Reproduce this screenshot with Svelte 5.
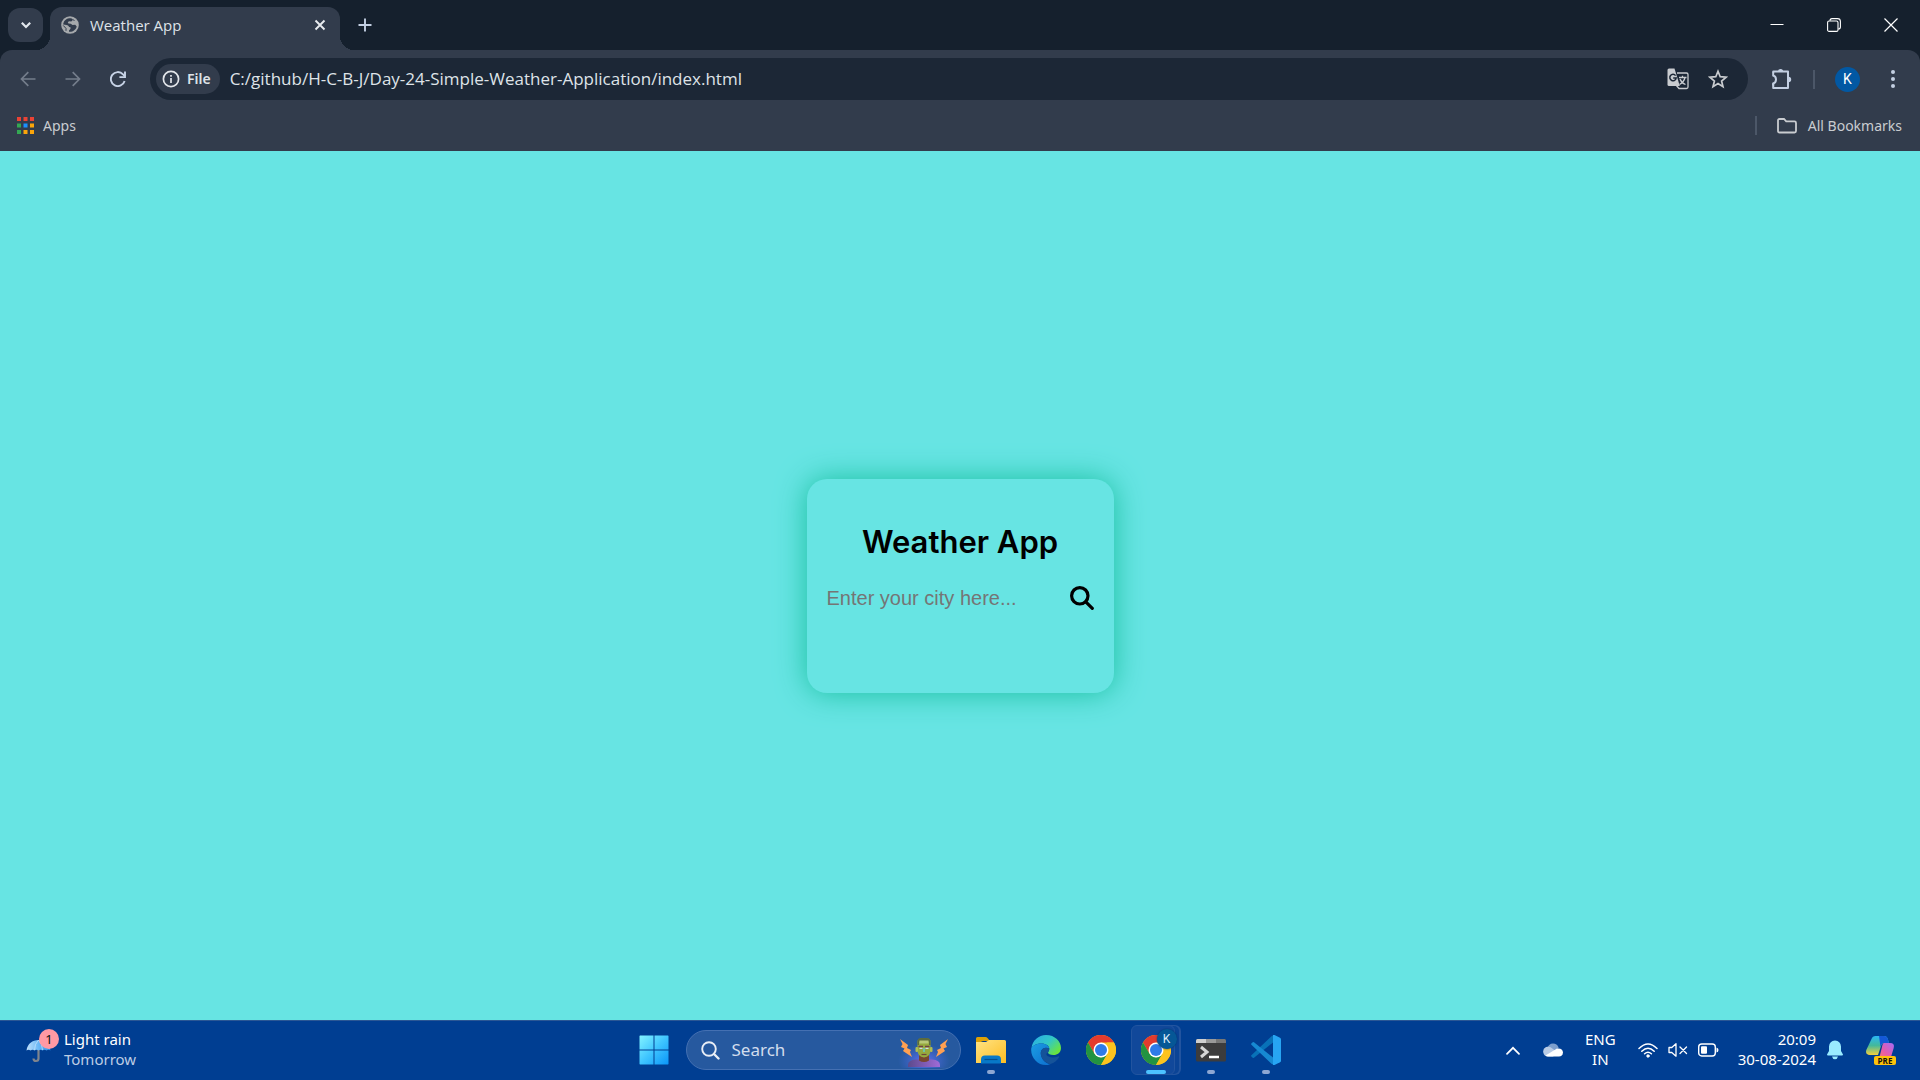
<script lang="ts">
  let city = $state('');
  let query = $state('');
  const address = 'C:/github/H-C-B-J/Day-24-Simple-Weather-Application/index.html';
  const dots = [
    ['#ea4335', '#ea4335', '#ea4335'],
    ['#34a853', '#1a90ff', '#fba50a'],
    ['#34a853', '#fba50a', '#fba50a']
  ];
</script>

{#snippet chrome()}
  <svg width="30" height="30" viewBox="0 0 30 30" aria-hidden="true">
    <circle cx="15" cy="15" r="15" fill="#fcc31e" />
    <path d="M2 7.5A15 15 0 0 1 28 7.5H15L8.5 18.8z" fill="#e33b2e" />
    <path d="M2 7.5A15 15 0 0 0 15 30L21.5 18.7 15 22.5 8.5 18.8z" fill="#229342" />
    <path d="M28 7.5A15 15 0 0 1 15 30L21.5 18.7 21 7.5z" fill="#fcc31e" />
    <circle cx="15" cy="15" r="7.5" fill="#fff" />
    <circle cx="15" cy="15" r="6" fill="#2f7be8" />
  </svg>
{/snippet}

<div class="screen">
  <header class="browser">
    <div class="tabstrip">
      <button class="tab-search" aria-label="Search tabs">
        <svg width="12" height="8" viewBox="0 0 12 8"><path d="M1.8 1.8 6 6l4.200-4.200" fill="none" stroke="#e3e8ee" stroke-width="2.200" /></svg>
      </button>
      <div class="tab">
        <svg width="18" height="18" viewBox="0 0 18 18" aria-hidden="true">
          <circle cx="9" cy="9" r="8.800" fill="#a6a9ac" />
          <path d="M8.200 2.200C4.600 2.600 2.300 5.500 2.200 8.600L5.500 9c1.500.2 2.300.9 2.500 2l1.500.3v1.500L8 14.500v1.300c3.500.5 6.800-1.600 7.700-5.200l-1.500-1.900-2.700.4-1.700-1.300-2.400-.2-.6-1.600 1.600-.8 1.800.2 1.300-1V3l-1.400-.8z" fill="#323c4c" />
          <path d="M2.200 9.400 5 12.400v2.400M11.500 3.500l2 1" stroke="#323c4c" stroke-width="1" fill="none" />
        </svg>
        <span class="tab-title">Weather App</span>
        <button class="bare" aria-label="Close tab">
          <svg width="12" height="12" viewBox="0 0 12 12"><path d="M1.500 1.500l9 9m0-9l-9 9" stroke="#e8ebef" stroke-width="1.900" /></svg>
        </button>
      </div>
      <button class="bare new-tab" aria-label="New tab">
        <svg width="14" height="14" viewBox="0 0 14 14"><path d="M7 .5v13M.5 7h13" stroke="#c3cfe2" stroke-width="1.900" /></svg>
      </button>
      <div class="window-controls">
        <button class="bare" aria-label="Minimize"><svg width="14" height="14" viewBox="0 0 14 14"><path d="M.5 6.500h13" stroke="#fff" /></svg></button>
        <button class="bare" aria-label="Restore">
          <svg width="14" height="14" viewBox="0 0 14 14" fill="none" stroke="#fff" stroke-width="1.100"><rect x=".6" y="3" width="10.400" height="10.400" rx="1.500" /><path d="M3 2.800Q3 .6 5 .6h5.500q2.900 0 2.900 2.900V9q0 2-2.200 2" /></svg>
        </button>
        <button class="bare" aria-label="Close window"><svg width="14" height="14" viewBox="0 0 14 14"><path d="M.5.5l13 13m0-13l-13 13" stroke="#fff" stroke-width="1.200" /></svg></button>
      </div>
    </div>

    <div class="toolbar">
      <nav class="nav" aria-label="History">
        <button class="bare" aria-label="Back"><svg width="16" height="16" viewBox="0 0 16 16" fill="none" stroke="#747d8b" stroke-width="1.700"><path d="M15.500 8H2M8.300 1.200 1.500 8l6.800 6.800" /></svg></button>
        <button class="bare" aria-label="Forward"><svg width="16" height="16" viewBox="0 0 16 16" fill="none" stroke="#747d8b" stroke-width="1.700"><path d="M.5 8H14M7.700 1.200 14.500 8l-6.800 6.800" /></svg></button>
        <button class="bare" aria-label="Reload"><svg width="16" height="16" viewBox="0 0 16 16" fill="none" stroke="#c7d3e6" stroke-width="1.900"><path d="M14.600 10A7 7 0 1 1 13 3.300L14.800 5.200" /><path d="M15 .5v5.600H9.400" /></svg></button>
      </nav>
      <div class="omnibox">
        <button class="chip">
          <svg width="18" height="18" viewBox="0 0 18 18" aria-hidden="true"><circle cx="9" cy="9" r="7.600" fill="none" stroke="#e3e6ea" stroke-width="1.700" /><path d="M9 8v5M9 5v1.800" stroke="#e3e6ea" stroke-width="1.700" /></svg>
          File
        </button>
        <input class="address" aria-label="Address" value={address} spellcheck="false" />
        <button class="bare" aria-label="Translate this page">
          <svg width="22" height="22" viewBox="0 0 22 22"><path d="M10 5h9.500q1.500 0 1.500 1.500V19q0 1.500-1.500 1.500H12L9 17" fill="none" stroke="#c9ccd0" stroke-width="1.300" /><path d="M2 .5h5.500L12.800 18H2Q.5 18 .5 16.500V2Q.5.500 2 .5z" fill="#c9ccd0" /><path d="M8.600 7.600A3.200 3.200 0 1 0 9.200 10H6.200" fill="none" stroke="#1c2736" stroke-width="1.500" /><path d="M12 9.500h7.500M15.500 7.800v1.700M18 9.500q-1 4.500-5.500 7M13 11q1.500 4 5.500 5.500" fill="none" stroke="#c9ccd0" stroke-width="1.300" /></svg>
        </button>
        <button class="bare" aria-label="Bookmark this page">
          <svg width="20" height="20" viewBox="0 0 20 20"><path d="M10 2.300l2.200 5.400 5.900.5-4.500 3.800 1.400 5.700L10 14.600l-5 3.100 1.400-5.700-4.500-3.800 5.900-.5z" fill="none" stroke="#c9ccd0" stroke-width="1.700" /></svg>
        </button>
      </div>
      <div class="tools">
        <button class="bare" aria-label="Extensions">
          <svg width="22" height="22" viewBox="0 0 22 22"><path d="M2.200 5V3.500H17V9M17 13v7H2.200V15.500" fill="none" stroke="#c3cfe2" stroke-width="2" stroke-linejoin="round" /><path d="M2.200 4.500v3q2.800.8 2.800 4t-2.800 4v2M17 8.500v5" fill="none" stroke="#c3cfe2" stroke-width="2" /><path d="M7 3.500a2.600 2.600 0 0 1 5.200 0zM17.500 8.800a2.700 2.700 0 0 1 0 5.400z" fill="#c3cfe2" /></svg>
        </button>
        <span class="rule"></span>
        <button class="avatar">K</button>
        <button class="bare" aria-label="Menu"><svg width="6" height="20" viewBox="0 0 6 20" fill="#c3cfe2"><circle cx="3" cy="3" r="2" /><circle cx="3" cy="10" r="2" /><circle cx="3" cy="17" r="2" /></svg></button>
      </div>
    </div>

    <div class="bookmarks">
      <a href="#apps">
        <svg width="17" height="17" viewBox="0 0 17 17" aria-hidden="true">
          {#each dots as row, y}{#each row as fill, x}<rect x={x * 6.5} y={y * 6.5} width="4" height="4" {fill} />{/each}{/each}
        </svg>
        Apps
      </a>
      <a class="all" href="#bookmarks">
        <span class="rule"></span>
        <svg width="20" height="16" viewBox="0 0 20 16" aria-hidden="true"><path d="M1 2.500Q1 1 2.500 1H7l2.200 2.400h8.300Q19 3.400 19 4.900V13q0 1.500-1.500 1.500h-15Q1 14.500 1 13z" fill="none" stroke="#c9ccd0" stroke-width="1.800" /></svg>
        All Bookmarks
      </a>
    </div>
  </header>

  <main>
    <section class="card">
      <h1>Weather App</h1>
      <form class="finder" onsubmit={(e) => e.preventDefault()}>
        <input type="text" aria-label="City" placeholder="Enter your city here..." bind:value={city} />
        <button class="bare" aria-label="Search">
          <svg width="24" height="24" viewBox="0 0 24 24" fill="none" stroke="#000"><circle cx="9.800" cy="9.800" r="8.200" stroke-width="3.200" /><path d="M15.800 15.800l6.500 6.500" stroke-width="3.200" stroke-linecap="round" /></svg>
        </button>
      </form>
    </section>
  </main>

  <footer class="taskbar">
    <button class="weather">
      <span class="umbrella">
        <svg width="25" height="30" viewBox="0 0 25 30" aria-hidden="true">
          <defs><linearGradient id="canopy" x1="0" x2="1"><stop offset="0" stop-color="#bfe0fb" /><stop offset=".5" stop-color="#6bb8f6" /><stop offset="1" stop-color="#2f8fe8" /></linearGradient></defs>
          <path d="M12.500 15v8.500q0 2.500-2.500 2.500t-2.500-2.500" fill="none" stroke="#7f848d" stroke-width="2.200" />
          <path d="M.5 15.500C1.500 8.500 6.500 5 12.500 5s11 3.500 12 10.500q-2-1.500-4 0-2-1.500-4 0-2-1.500-4 0-2-1.500-4 0-2-1.500-4 0-2-1.500-4 0z" fill="url(#canopy)" />
          <path d="M8.500 15Q8.500 9 12.500 5q4 4 4 10" fill="none" stroke="#c9e5fb" stroke-width=".7" />
        </svg>
        <span class="count">1</span>
      </span>
      <span class="lines"><span>Light rain</span><span class="dim">Tomorrow</span></span>
    </button>

    <div class="dock">
      <button class="slot" aria-label="Start">
        <svg width="30" height="30" viewBox="0 0 30 30"><defs><linearGradient id="win" x1="0" y1="0" x2="1" y2="1"><stop offset="0" stop-color="#83f3ff" /><stop offset=".5" stop-color="#3fc5ff" /><stop offset="1" stop-color="#0a95f8" /></linearGradient></defs><path d="M1 .5h13.500v14H.5V1zM15.500.5H29l.5.500v13.500h-14zM.5 15.500h14v14H1l-.5-.5zM15.500 15.500h14V29l-.5.500H15.500z" fill="url(#win)" /></svg>
      </button>
      <label class="search">
        <svg width="19" height="19" viewBox="0 0 19 19" fill="none" stroke="#e9eef6" aria-hidden="true"><circle cx="8" cy="8" r="6.800" stroke-width="1.900" /><path d="M13 13l4.500 4.500" stroke-width="2.400" stroke-linecap="round" /></svg>
        <input type="text" aria-label="Search" placeholder="Search" bind:value={query} />
        <svg class="monster" width="54" height="32" viewBox="0 0 54 32" aria-hidden="true">
          <defs><radialGradient id="glow"><stop offset="0" stop-color="#6b73ff" stop-opacity=".9" /><stop offset="1" stop-color="#4a6be0" stop-opacity="0" /></radialGradient><linearGradient id="shirt" x1="0" x2="1"><stop offset="0" stop-color="#5c4a8c" /><stop offset="1" stop-color="#a06bd8" /></linearGradient></defs>
          <ellipse cx="27" cy="25" rx="26" ry="17" fill="url(#glow)" />
          <path d="M3 3l8 6-1 3 4 2-1 2 2 5-9-6 1.500-2.500-3.500-1.500L5.500 8z" fill="#ffa052" />
          <path d="M51 3l-8 6 1 3-4 2 1 2-2 5 9-6-1.500-2.500 3.500-1.500L48.500 8z" fill="#ffa052" />
          <path d="M11 31v-2q0-5 8-5.500h16q8 .5 8 5.500v2z" fill="url(#shirt)" />
          <path d="M22 19h10v5.500q-5 3-10 0z" fill="#78472f" />
          <path d="M20.500 5Q21 2.500 24 2.500h6q3 0 3.500 2.500v9q0 7-6.500 7.500-6.500-.5-6.500-7.500z" fill="#96a93e" />
          <path d="M20.500 9V5Q21 2 24 2h6q3 0 3.500 3v4H32V5.500H22V9z" fill="#5c6b3d" />
          <path d="M22.500 4.500h9v3h-9z" fill="#b8c877" />
          <rect x="18.500" y="11" width="2.500" height="5" rx="1" fill="#b0bd52" /><rect x="33" y="11" width="2.500" height="5" rx="1" fill="#b0bd52" />
          <path d="M21.500 10.500h4.500M28 10.500h4.500" stroke="#6f3f45" stroke-width="1.600" />
          <path d="M22.500 12.300h3M28.500 12.300h3" stroke="#d4dce4" stroke-width="1.300" />
          <path d="M27 12v4" stroke="#6cc7b7" stroke-width="1.700" /><path d="M24.500 18.500h5" stroke="#6f4638" stroke-width="1.200" />
        </svg>
      </label>
      <button class="slot running" aria-label="File Explorer">
        <svg width="30" height="28" viewBox="0 0 30 28"><defs><linearGradient id="folder" x1="0" y1="0" x2="1" y2="1"><stop offset="0" stop-color="#ffe384" /><stop offset="1" stop-color="#fdbd22" /></linearGradient></defs><path d="M0 8V2.500Q0 1 1.500 1h8q1.200 0 2 1L14 5H7z" fill="#dda107" /><path d="M0 6h10l3-2h15.500Q30 4 30 5.500V27H0z" fill="url(#folder)" /><path d="M5 27.500v-4q0-4 4-4h12q4 0 4 4v4z" fill="#0878c8" /><path d="M8.500 23.500h13" stroke="#034f91" stroke-width="1.200" /></svg>
      </button>
      <button class="slot" aria-label="Edge">
        <svg width="30" height="30" viewBox="0 0 30 30"><defs><linearGradient id="edgeA" x1="0" y1="0" x2="1" y2=".7"><stop offset="0" stop-color="#2aa9e8" /><stop offset=".55" stop-color="#31c7c7" /><stop offset="1" stop-color="#6be53b" /></linearGradient><linearGradient id="edgeB" x1="0" y1="0" x2="1" y2="1"><stop offset="0" stop-color="#1b9de2" /><stop offset="1" stop-color="#0d6fd0" /></linearGradient></defs><path d="M.5 13C1.500 5.500 7.500 0 15 0c9 0 15 6.500 15 13 0 4.500-3.500 7-7.500 7-3.500 0-5.500-1.200-5.500-2.400 0-.8 1.300-1.600 1.300-3.900C18.300 11 15 8.500 10.500 8.500c-5 0-8.500 2-10 4.500z" fill="url(#edgeA)" /><path d="M.3 13C2 10 6 8.500 10 8.500c4.500 0 8 2.300 8.300 5C12.500 11 9.500 15 9.800 19c.4 5 4.700 9.500 9.700 10-2 1-3.500 1-4.500 1C6 30-.8 22 .3 13z" fill="url(#edgeB)" /><path d="M18.300 13.500C12.500 11 9.500 15 9.800 19c.4 5.500 5.700 9.500 9.700 10 3.500-1 6.800-3.500 8.600-6.800.4-.7-.3-1.200-1-.8-8 3.300-15-1.800-10.100-3.800 0-.8 1.300-1.800 1.300-4.100z" fill="#155399" /></svg>
      </button>
      <button class="slot" aria-label="Chrome">{@render chrome()}</button>
      <button class="slot active" aria-label="Chrome, profile K">{@render chrome()}<span class="profile">K</span></button>
      <button class="slot running" aria-label="Terminal">
        <svg width="30" height="24" viewBox="0 0 30 24"><rect y="1" width="30" height="22.500" rx="1.500" fill="#3c3c3d" /><path d="M0 5V2.500Q0 1 1.500 1H10v4z" fill="#cfcfcf" /><path d="M10 1h10v4H10z" fill="#999" /><path d="M20 1h8.500Q30 1 30 2.500V5H20z" fill="#777" /><path d="M5 9l6 5-6 5" fill="none" stroke="#d6d6d6" stroke-width="3" /><path d="M13 19h10" stroke="#fff" stroke-width="2.500" /></svg>
      </button>
      <button class="slot running" aria-label="Visual Studio Code">
        <svg width="30" height="30" viewBox="0 0 30 30"><path d="M22 7.500 3 22.800q-.7.500-1.300 0L.4 21.600q-.7-.7 0-1.400L20.500 1.300Q21.500.300 23 .5z" fill="#0872b8" /><path d="M22 22.500 3 7.200q-.7-.5-1.300 0L.4 8.400q-.7.700 0 1.400l20.100 18.900q1 1 2.500.8z" fill="#1689d2" /><path d="M22 0h1.500l5.500 2.700q1 .5 1 1.600v21.400q0 1.100-1 1.600L23.500 30H22z" fill="#27a5f3" /></svg>
      </button>
    </div>

    <div class="tray">
      <button class="bare" aria-label="Show hidden icons"><svg width="14" height="9" viewBox="0 0 14 9"><path d="M1 7.800 7 1.800l6 6" fill="none" stroke="#fff" stroke-width="1.700" stroke-linecap="round" /></svg></button>
      <button class="bare cloud" aria-label="OneDrive">
        <svg width="20" height="14" viewBox="0 0 20 14"><path d="M4 6Q5.500.5 10 .5q4 0 5.700 4.200L10 9z" fill="#7d9fcd" /><path d="M5 13.500a5 5 0 0 1-2-9.500q4-1 7 2l5 4-5 3.500z" fill="#b8cbe5" /><path d="M2.500 12.500 14 5.500q5.500-.8 6 4-.5 4-4 4H5q-1.500 0-2.500-1z" fill="#fff" /></svg>
      </button>
      <button class="lines lang"><span>ENG</span><span>IN</span></button>
      <button class="status" aria-label="Network, volume and battery">
        <svg width="20" height="15" viewBox="0 0 20 15" fill="none" stroke="#fff" stroke-width="1.500" stroke-linecap="round"><path d="M1 5.500q9-9 18 0M3.800 8.200q6.200-6 12.400 0M6.600 10.700q3.400-3 6.800 0" /><circle cx="10" cy="13" r="1.200" fill="#fff" stroke-width="1" /></svg>
        <svg width="20" height="14" viewBox="0 0 20 14" fill="none" stroke="#fff" stroke-width="1.300" stroke-linecap="round" stroke-linejoin="round"><path d="M1 4.500h2.800L8 .8v12.400L3.800 9.500H1zM12 4l6.500 6.500M18.500 4 12 10.500" /></svg>
        <svg width="21" height="14" viewBox="0 0 21 14"><rect x=".7" y="1" width="16.600" height="12" rx="3" fill="none" stroke="#fff" stroke-width="1.400" /><rect x="3" y="3.300" width="6" height="7.400" rx="1" fill="#fff" /><path d="M18.500 4.500q2 .5 2 2.500t-2 2.500z" fill="#fff" /></svg>
      </button>
      <button class="lines clock"><span>20:09</span><span>30-08-2024</span></button>
      <button class="bare" aria-label="Notifications"><svg width="16" height="20" viewBox="0 0 16 20" fill="#99ebff"><path d="M8 .5q5.500.3 6 6V11l2 3.500q0 1-1 1H1q-1 0-1-1L2 11V6.500q.5-5.700 6-6zM5 16.500h6q-.6 2.700-3 2.700t-3-2.700z" /></svg></button>
      <button class="bare copilot" aria-label="Copilot">
        <svg width="30" height="28" viewBox="0 0 30 28"><defs><linearGradient id="coA" x1="0" y1="0" x2="0" y2="1"><stop offset="0" stop-color="#2ab7f5" /><stop offset=".5" stop-color="#44b99a" /><stop offset="1" stop-color="#f5d13d" /></linearGradient><linearGradient id="coB" x1="1" y1="0" x2="0" y2="1"><stop offset="0" stop-color="#a56bf5" /><stop offset=".5" stop-color="#e75ba9" /><stop offset="1" stop-color="#ff8a50" /></linearGradient></defs><path d="M5.500 3Q6.500 0 9.500 0H18q3 0 3.800 3l1.200 4h-5q-2 0-2.800 2.500L12 19H4q-5 0-3.700-5z" fill="url(#coA)" /><path d="M13 0h5q3 0 3.800 3L23 7h-5q-2.500 0-3.500 4z" fill="#1458d6" /><path d="M18 7h6q5 0 3.700 5L25 21q-1 4-5 4h-8q-3 0-2-3h1.500Q13 22 14 19l2-8q.7-4 2-4z" fill="url(#coB)" /></svg>
        <span class="pre">PRE</span>
      </button>
    </div>
  </footer>
</div>

<style>
  :global(body) { margin: 0; }
  .screen {
    display: flex; flex-direction: column; min-height: 100vh;
    font: 15px/20px "Noto Sans", "Open Sans", sans-serif; color: #dfe3e8;
    background: #323c4c;
  }
  .screen :global(*) { box-sizing: border-box; }
  svg { display: block; flex: none; }
  button, input { font: inherit; color: inherit; border: 0; background: none; padding: 0; margin: 0; outline: 0; }
  button { cursor: pointer; }
  .bare { display: grid; place-items: center; }
  a { color: inherit; text-decoration: none; display: flex; align-items: center; }

  .tabstrip { display: flex; align-items: center; height: 50px; padding: 0 22px 0 8px; background: #15202d; }
  .tab-search { display: grid; place-items: center; width: 35px; height: 34px; border-radius: 12px; background: #323c4c; }
  .tab {
    position: relative; align-self: flex-end; display: flex; align-items: center; gap: 11px;
    width: 290px; height: 43px; margin-left: 7px; padding: 0 14px 7px 11px;
    border-radius: 12px 12px 0 0; background: #323c4c;
  }
  .tab::before, .tab::after {
    content: ""; position: absolute; bottom: 0; width: 14px; height: 14px;
  }
  .tab::before { right: 100%; background: radial-gradient(circle at 0 0, transparent 14px, #323c4c 14px); }
  .tab::after { left: 100%; background: radial-gradient(circle at 100% 0, transparent 14px, #323c4c 14px); }
  .tab-title { flex: 1; font-family: "Open Sans", sans-serif; }
  .new-tab { margin-left: 18px; }
  .window-controls { display: flex; gap: 43px; margin-left: auto; }
  .browser { background: #15202d; }

  .toolbar { display: flex; align-items: center; height: 58px; padding: 0 24px 0 20px; background: #323c4c; border-radius: 12px 12px 0 0; }
  .nav { display: flex; gap: 29px; margin-right: 24px; }
  .omnibox { flex: 1; display: flex; align-items: center; gap: 19px; height: 42px; padding: 0 20px 0 6px; border-radius: 21px; background: #1c2736; }
  .chip { display: flex; align-items: center; gap: 7px; height: 30px; padding: 0 9px 0 6px; border-radius: 15px; background: #323c4c; font-weight: 600; font-size: 14px; }
  .address { flex: 1; min-width: 0; margin-left: -9px; font-size: 17px; line-height: 24px; font-family: "Open Sans", sans-serif; }
  .tools { display: flex; align-items: center; gap: 20px; margin-left: 23px; }
  .rule { width: 2px; height: 19px; background: #4c5768; }
  .avatar { display: grid; place-items: center; width: 25px; height: 25px; border-radius: 50%; background: #0258a3; color: #fff; font: 14px/20px Roboto, sans-serif; }
  .tools .avatar { margin-right: 10px; }

  .bookmarks { display: flex; justify-content: space-between; height: 43px; padding: 0 18px 8px 17px; background: #323c4c; font-size: 14px; color: #c9ccd0; }
  .bookmarks a { gap: 9px; }
  .bookmarks .all { gap: 11px; }
  .all .rule { margin-right: 9px; }

  main { flex: 1; display: grid; place-items: center; background: #67e4e3; color: #000; }
  .card { width: 307px; height: 214px; padding: 40px 20px; border-radius: 20px; background: #67e4e3; box-shadow: 0 0 30px #19c0a0; }
  h1 { margin: 0 0 22px; font: 600 31px/45px Inter, sans-serif; text-align: center; }
  .finder { display: flex; align-items: center; justify-content: space-between; }
  .finder input { flex: 1; min-width: 0; font: 20px/24px "Liberation Sans", sans-serif; }
  .finder input::placeholder { color: #757575; opacity: 1; }

  .taskbar { display: grid; grid-template-columns: 1fr auto 1fr; align-items: center; height: 60px; box-shadow: inset 0 1px #2b5795; background: #003e92; color: #fff; }
  .weather { display: flex; align-items: center; gap: 13px; justify-self: start; margin-left: 26px; text-align: left; }
  .umbrella { position: relative; }
  .count { position: absolute; top: -6px; left: 13px; width: 20px; height: 20px; border-radius: 50%; background: #ff99a4; color: #111; font-size: 13px; text-align: center; }
  .lines { display: flex; flex-direction: column; padding-bottom: 2px; }
  .lines span { display: block; }
  .lines .dim { color: #bccce4; }
  .dock { display: flex; align-items: center; }
  .slot { position: relative; display: grid; place-items: center; width: 55px; height: 50px; }
  .running::after, .active::after { content: ""; position: absolute; bottom: 1px; left: 50%; width: 8px; height: 4px; margin-left: -4px; border-radius: 2px; background: #8da7d3; }
  .active::after { width: 20px; margin-left: -10px; background: #4cc2ff; }
  .active::before { content: ""; position: absolute; inset: 0 9px 0 2px; border: 1px solid #22549f; border-radius: 6px; background: #11489a; box-shadow: 5px 0 0 -1px #0b4496, 6px 0 0 #22549f; }
  .active :global(svg) { position: relative; }
  .profile { position: absolute; top: 4px; right: 7px; width: 20px; height: 20px; border-radius: 50%; background: #055796; box-shadow: 0 0 2px #02346b; font: 12px/20px Roboto, sans-serif; color: #dcebf8; text-align: center; }
  .search { display: flex; align-items: center; gap: 12px; width: 275px; height: 40px; margin: 0 3px 0 4px; padding: 0 9px 0 14px; border: 1px solid #4470b2; border-radius: 20px; background: #26599f; }
  .search input { flex: 1; min-width: 0; font-size: 17px; }
  .search input::placeholder { color: #d2dded; opacity: 1; }
  .monster { align-self: flex-end; margin-bottom: 1px; }
  .tray { display: flex; align-items: center; justify-self: end; padding-right: 24px; }
  .cloud { margin: 0 22px 0 23px; }
  .lang { align-items: center; margin-right: 22px; }
  .status { display: flex; align-items: center; gap: 10px; margin-right: 19px; }
  .clock { align-items: flex-end; margin-right: 11px; }
  .copilot { position: relative; margin-left: 23px; }
  .pre { position: absolute; bottom: -1px; right: 0; width: 22px; border-radius: 2px; background: #ffc20a; color: #111; font: 700 8px/9px "Open Sans", sans-serif; }
</style>
